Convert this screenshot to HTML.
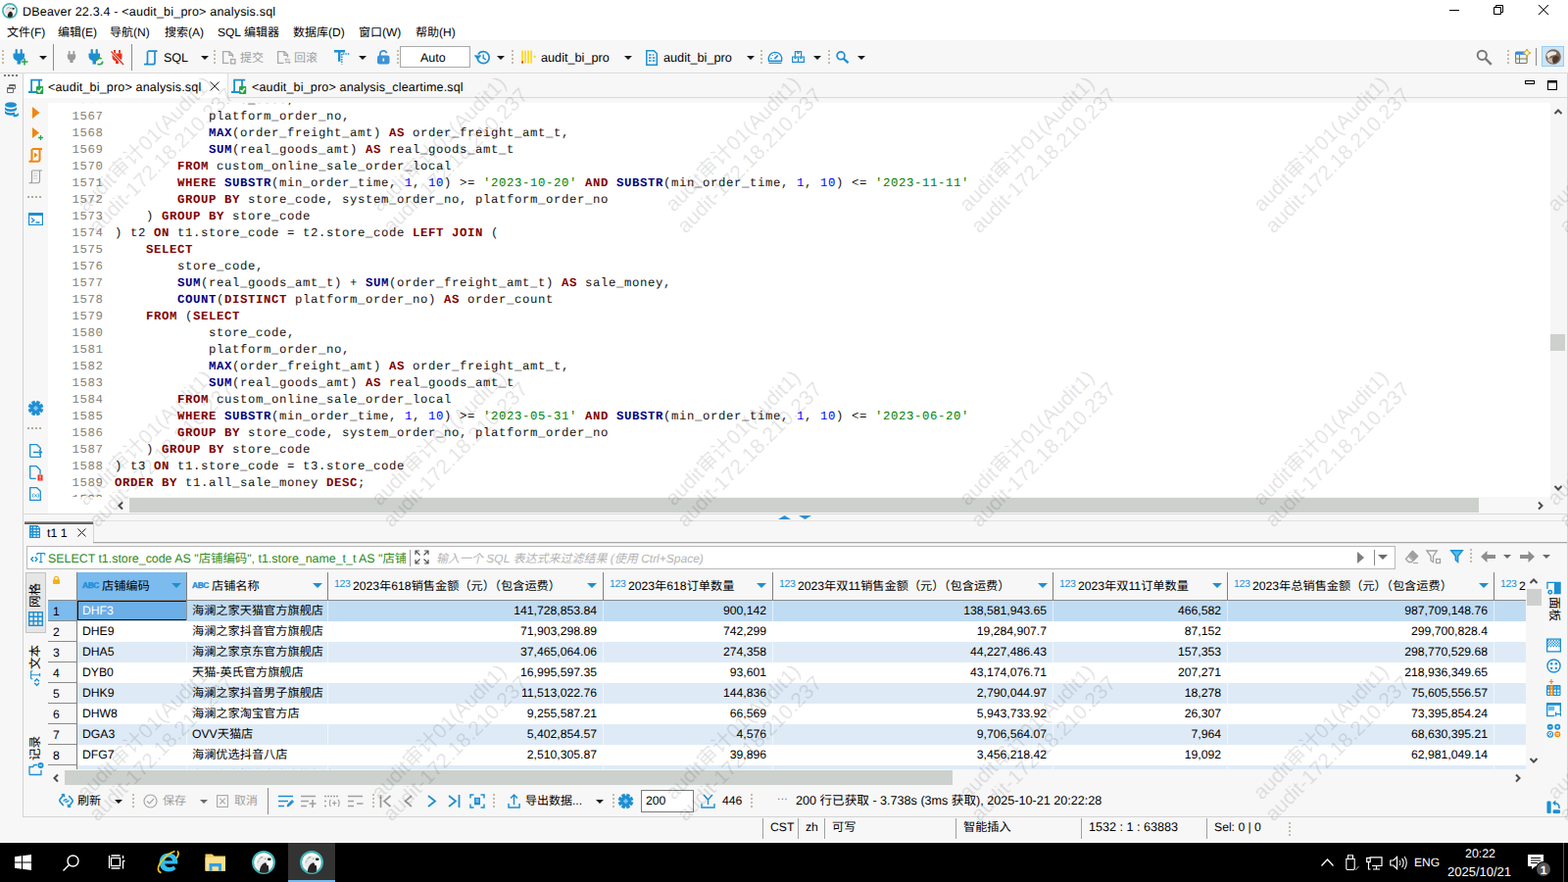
<!DOCTYPE html>
<html lang="zh">
<head>
<meta charset="utf-8">
<title>DBeaver 22.3.4 - &lt;audit_bi_pro&gt; analysis.sql</title>
<style>
*{box-sizing:border-box;margin:0;padding:0}
html,body{width:1600px;height:900px;overflow:hidden;background:#f7f7f7;font-family:"Liberation Sans","Noto Sans CJK SC",sans-serif;font-size:12px;color:#000;text-rendering:geometricPrecision}
body{position:relative}
.a{position:absolute}
.t{position:absolute;white-space:nowrap;line-height:16px;font-size:12px}
svg{position:absolute;overflow:visible}
#titlebar{position:absolute;left:0;top:0;width:1600px;height:41px;background:#fff}
.dd{position:absolute;width:0;height:0;border-left:4px solid transparent;border-right:4px solid transparent;border-top:4px solid #1a1a1a}
.ddg{border-top-color:#6a6a6a}
.vsep{position:absolute;width:1px;background:#8c8c8c}
.dots{position:absolute;width:2px;height:16px;background:repeating-linear-gradient(to bottom,#c4bba5 0,#c4bba5 2px,transparent 2px,transparent 4px)}
.hdots{position:absolute;height:2px;width:14px;background:repeating-linear-gradient(to right,#b3ab98 0,#b3ab98 2px,transparent 2px,transparent 4px)}
.dis{color:#a0a0a0}

.t::before{content:"\200b"}
#code{position:absolute;left:0;top:-11px;font-family:"Liberation Mono",monospace;font-size:12.300px;letter-spacing:.62px;line-height:17px;white-space:pre;color:#111;tab-size:4}
#code i{font-style:normal;display:inline-block;width:56.600px;text-align:right;color:#808080;margin-right:11.400px}
#code b{color:#800000;font-weight:bold}
#code b.f{color:#000080}
#code s{color:#008000;text-decoration:none}
#code u{color:#0000ff;text-decoration:none}
.row{position:absolute;left:29px;width:1479px;height:21px}
.r1{background:#c0dcf3}
.ro{background:#deebf7}
.cl{position:absolute;top:0;width:1px;height:28px;background:#7f7f7f}
.cr{position:absolute;top:29px;width:1px;height:172px;background:rgba(255,255,255,.55)}
.rs{position:absolute;left:0;width:29px;height:1px;background:#8a8a8a}
.abc{position:absolute;top:8px;font-size:8.400px;font-weight:bold;color:#1a8cd8;-webkit-text-stroke:.35px #1a8cd8;letter-spacing:-.4px;line-height:10px}
.n123{position:absolute;top:6px;font-size:10.500px;color:#1d8fd1;line-height:12px;letter-spacing:-.4px}
.h{top:6px;font-size:12.200px}
.tri{position:absolute;top:11px;width:0;height:0;border-left:5px solid transparent;border-right:5px solid transparent;border-top:5px solid #1d8fd1}
.rn{left:5px;font-size:12.200px}
.c1{left:35px;font-size:12.200px}
.c2{left:147px;font-size:12.200px}
.nr{font-size:12.200px}
.s{top:836px;font-size:12.200px}
.st{top:835px;height:21px;background:#a0a0a0}
.wm{position:absolute;width:300px;height:48px;margin:-24px 0 0 -150px;text-align:center;font-size:21px;line-height:24px;color:rgba(0,0,0,.065);text-shadow:0 0 1px rgba(0,0,0,.055);white-space:nowrap;transform:rotate(-45deg);transform-origin:50% 50%;z-index:50}
</style>
</head>
<body>
<!-- ===== title bar + menu ===== -->
<div id="titlebar">
<svg style="left:2px;top:3px" width="16" height="16" viewBox="0 0 24 24"><circle cx="12" cy="12" r="10.700" fill="#fff" stroke="#45b3b4" stroke-width="2.600"/><path d="M4.800 15c-.5-4 1.500-8.300 6-9.300 3-.7 6 0 8.300 2 .8.700.5 1.800-.5 2.100l-2 .7-.5 3.500-2.500-2c-2 1-3.500 3-4 6.500-2.500-.5-4.300-1.500-4.800-3.500z" fill="#e4e4e4"/><path d="M8.500 21.300c0-4 1.500-7 4.500-8.500l2.500 1.500.8 2.500c.3 1.500 0 3-.8 4.500-2 .9-4.800.9-7 0z" fill="#2a2322"/><ellipse cx="17.400" cy="8.700" rx="1.800" ry="1.300" fill="#1a1a1a"/><circle cx="13.300" cy="8.300" r=".8" fill="#333"/><path d="M7 9c1-1.500 2.500-2.300 4-2.500" stroke="#555" stroke-width=".8" fill="none"/></svg>
<span class="t" id="ttl" style="left:23px;top:4px;font-size:12.500px;letter-spacing:.2px">DBeaver 22.3.4 - &lt;audit_bi_pro&gt; analysis.sql</span>
<svg style="left:1479px;top:4px" width="102" height="12" viewBox="0 0 102 12" fill="none" stroke="#000" stroke-width="1"><path d="M0 6.500h10"/><path d="M45.500 3.500h7v7h-7z M47.500 3.500v-2h7v7h-2"/><path d="M91 1l10 10M101 1l-10 10"/></svg>
<span class="t m" style="left:7px;top:25px">文件(F)</span>
<span class="t m" style="left:59px;top:25px">编辑(E)</span>
<span class="t m" style="left:112px;top:25px">导航(N)</span>
<span class="t m" style="left:168px;top:25px">搜索(A)</span>
<span class="t m" style="left:222px;top:25px">SQL 编辑器</span>
<span class="t m" style="left:299px;top:25px">数据库(D)</span>
<span class="t m" style="left:366px;top:25px">窗口(W)</span>
<span class="t m" style="left:424px;top:25px">帮助(H)</span>
</div>
<!-- ===== main toolbar (y 41-74) ===== -->
<div class="a" id="toolbar" style="left:0;top:41px;width:1600px;height:34px;background:#f7f7f7;border-bottom:1px solid #dcdcdc"></div>
<div class="dots" style="left:2px;top:51px"></div>
<!-- new connection plug -->
<svg style="left:13px;top:51px" width="16" height="16" viewBox="0 0 16 16"><path d="M3.700 0v4M8.700 0v4" stroke="#1d8fd1" stroke-width="2.200" stroke-linecap="round"/><path d="M.5 3.500h11.500v3c0 2.500-2 4-4 4.500V14.500h-3.500v-3.500C2.500 10.500.5 9 .5 6.500z" fill="#1d8fd1"/><path d="M12 8.500v7M8.500 12h7" stroke="#2aa84a" stroke-width="1.600"/></svg>
<div class="dd" style="left:40px;top:57px"></div>
<div class="vsep" style="left:54px;top:45px;height:27px"></div>
<svg style="left:68px;top:52px" width="10" height="13" viewBox="0 0 10 14"><path d="M2.500 0v3.500M7.500 0v3.500" stroke="#9a9a9a" stroke-width="1.800"/><path d="M.5 3.500h9v3c0 2-1.200 3.300-2.800 3.600V13H3.300v-2.900C1.700 9.800.5 8.500.5 6.500z" fill="#9a9a9a"/></svg>
<svg style="left:90px;top:51px" width="16" height="16" viewBox="0 0 16 16"><path d="M3.700 0v4M8.700 0v4" stroke="#1d8fd1" stroke-width="2.200" stroke-linecap="round"/><path d="M.5 3.500h11.500v3c0 2.500-2 4-4 4.500V14.500h-3.500v-3.500C2.500 10.500.5 9 .5 6.500z" fill="#1d8fd1"/><circle cx="11.500" cy="11.500" r="3.200" fill="none" stroke="#2aa84a" stroke-width="1.600" stroke-dasharray="7 3"/></svg>
<svg style="left:112px;top:51px" width="16" height="16" viewBox="0 0 16 16"><path d="M5 0v3.500M10 0v3.500" stroke="#e8331c" stroke-width="2"/><path d="M2.500 3.500h10v3.500c0 2.500-1.500 4-3.500 4.300V14h-3v-2.700C4 11 2.500 9.500 2.500 7z" fill="#e8331c"/><path d="M1 1l13 14" stroke="#f7f7f7" stroke-width="2.600"/><path d="M1.500 1.500l12.500 13.500" stroke="#e8331c" stroke-width="1.300"/></svg>
<div class="vsep" style="left:134px;top:45px;height:27px"></div>
<!-- SQL -->
<svg style="left:146px;top:51px" width="16" height="16" viewBox="0 0 16 16" fill="none" stroke="#1d8fd1" stroke-width="1.700"><path d="M5 1.200h9.500M12 1.200v11.500c0 1.300-1 2-2.200 2H1M4.500 1.200v11.200c0 1.500-1 2.300-2.200 2.300"/></svg>
<span class="t" style="left:167px;top:51px;font-size:12.500px">SQL</span>
<div class="dd" style="left:205px;top:57px"></div>
<div class="dots" style="left:218px;top:51px"></div>
<svg style="left:226px;top:51px" width="15" height="15" viewBox="0 0 16 16" fill="none" stroke="#a8a8a8" stroke-width="1.400"><path d="M8 14.300H1.700V1.700h7l3.600 3.600V8M8.500 1.700v4h4"/><rect x="10.200" y="10.200" width="4.600" height="4.600"/></svg>
<span class="t dis" style="left:245px;top:51px">提交</span>
<svg style="left:282px;top:51px" width="15" height="15" viewBox="0 0 16 16" fill="none" stroke="#a8a8a8" stroke-width="1.400"><path d="M8 14.300H1.700V1.700h7l3.600 3.600V8M8.500 1.700v4h4"/><path d="M9.500 10.500h5.500M9.500 13.500h5.500M11 9l-1.500 1.500L11 12M13.500 12l1.500 1.500-1.500 1.500" stroke-width="1"/></svg>
<span class="t dis" style="left:300px;top:51px">回滚</span>
<svg style="left:341px;top:51px" width="16" height="15" viewBox="0 0 16 15" fill="none" stroke="#1d8fd1"><path d="M0 1.200h11M5.200 1.200v10.500" stroke-width="2.400"/><path d="M8.800 4h6.500" stroke-width="1.500" stroke-dasharray="1.500 1"/><path d="M7.800 4v10.500" stroke-width="1.500" stroke-dasharray="1.500 1"/></svg>
<div class="dd" style="left:366px;top:57px"></div>
<svg style="left:385px;top:51px" width="13" height="15" viewBox="0 0 13 15"><path d="M2.800 6V4.200a3.500 3.500 0 016.800-1" fill="none" stroke="#3d92d6" stroke-width="1.700"/><rect x="0" y="5.500" width="12.500" height="9" rx="2.200" fill="#3d92d6"/><rect x="5.500" y="8.500" width="1.600" height="3" fill="#fff"/></svg>
<div class="dots" style="left:405px;top:51px"></div>
<div class="a" style="left:408px;top:47px;width:72px;height:22px;background:#fff;border:1px solid #a9a9a9"></div>
<span class="t" style="left:429px;top:51px;font-size:12.500px">Auto</span>
<svg style="left:484px;top:51px" width="17" height="16" viewBox="0 0 17 16" fill="none" stroke="#1d8fd1" stroke-width="1.700"><path d="M3.200 8a6 6 0 106-6.300A6 6 0 004 4.500"/><path d="M.5 5.500l3 3.300 3-3.300" stroke-width="1.400" fill="#1d8fd1"/><path d="M9.200 4.500V8.300l2.800 1.700" stroke-width="1.400"/></svg>
<div class="dd" style="left:507px;top:57px"></div>
<div class="dots" style="left:522px;top:51px"></div>
<svg style="left:532px;top:51px" width="16" height="14" viewBox="0 0 16 14"><path d="M1 .5v13M4 .5v13M7 .5v13M10 .5v13" stroke="#ffd400" stroke-width="1.500"/><rect x=".2" y="11.500" width="1.800" height="2" fill="#f02b1d"/><rect x="12.800" y="5.800" width="1.800" height="2" fill="#ffd400"/></svg>
<span class="t" style="left:552px;top:51px;font-size:12.700px">audit_bi_pro</span>
<div class="dd" style="left:637px;top:57px"></div>
<svg style="left:659px;top:51px" width="12" height="16" viewBox="0 0 12 16" fill="none" stroke="#1d8fd1"><path d="M.8.800h7.500l3 3V15.200H.8z" stroke-width="1.500"/><path d="M3 5h2.500M3 8h2.500M3 11h2.500M6.800 8h2.500M6.800 11h2.500M6.800 5h1.500" stroke-width="1.500"/></svg>
<span class="t" style="left:677px;top:51px;font-size:12.700px">audit_bi_pro</span>
<div class="dd" style="left:762px;top:57px"></div>
<div class="dots" style="left:776px;top:51px"></div>
<svg style="left:783px;top:52px" width="16" height="13" viewBox="0 0 16 13" fill="none" stroke="#1d8fd1" stroke-width="1.400"><path d="M1.500 10.200a6.800 6.800 0 1113 0z"/><path d="M1.500 12.300h13" stroke-width="1.200"/><path d="M7.500 8l3.200-3.500" stroke-width="1.800"/><path d="M3.200 7.500h1.300M8 2.500v1.300M5 4l.8.800" stroke-width="1"/></svg>
<svg style="left:808px;top:52px" width="13" height="12" viewBox="0 0 13 12" fill="none" stroke="#1d8fd1" stroke-width="1.200"><path d="M3.400.6h6.200v5.400H3.400zM.6 6h5.900v5.400H.6zM6.500 6h5.900v5.400H6.500z"/><path d="M5.700.6v1.800h1.600V.6M2.800 6v1.600h1.500V6M8.700 6v1.600h1.500V6" stroke-width="1"/></svg>
<div class="dd" style="left:830px;top:57px"></div>
<div class="dots" style="left:845px;top:51px"></div>
<svg style="left:853px;top:52px" width="14" height="13" viewBox="0 0 14 13" fill="none" stroke="#1d8fd1"><circle cx="5" cy="4.800" r="3.900" stroke-width="1.700"/><path d="M7.800 7.800l4.800 4.400" stroke-width="2.300"/></svg>
<div class="dd" style="left:875px;top:57px"></div>
<!-- right side of toolbar -->
<svg style="left:1506px;top:50px" width="17" height="17" viewBox="0 0 17 17" fill="none" stroke="#7a7a7a"><circle cx="6.300" cy="6.300" r="4.600" stroke-width="2"/><path d="M9.800 9.800l6 6" stroke-width="2.400"/></svg>
<div class="dots" style="left:1538px;top:51px"></div>
<svg style="left:1546px;top:50px" width="16" height="16" viewBox="0 0 16 16"><rect x=".6" y="3" width="11.500" height="11.500" rx="1" fill="#e8f3fb" stroke="#8a7a4a" stroke-width="1.100"/><rect x=".6" y="3" width="11.500" height="2.800" fill="#3b8ad9"/><path d="M4.500 6v8.500M.6 10h11.500" stroke="#8a7a4a" stroke-width="1"/><path d="M12 0l1.300 2.700L16 4l-2.700 1.300L12 8l-1.300-2.700L8 4l2.700-1.300z" fill="#fff6c8" stroke="#c9a227" stroke-width="1"/></svg>
<div class="vsep" style="left:1567px;top:49px;height:18px;background:#8a8a8a"></div>
<div class="a" style="left:1573px;top:47px;width:23px;height:21px;background:#cce4f7;border:1px solid #99ccf0"></div>
<svg style="left:1577px;top:50px" width="16" height="16" viewBox="0 0 16 16"><circle cx="8" cy="8" r="7.800" fill="#7d6657"/><path d="M1 6c2-3.500 6-4.500 9.500-3 1.500 1 1 2.500-1 3-3 .5-5 1-6.500 4z" fill="#efe9e2"/><path d="M8 8c2-1.500 4.500-1 6 .5-.5 3-2.500 5.500-5.500 6.500C7 13 7 10 8 8z" fill="#4a382f"/><path d="M2 11c1.500-1.500 3.500-2 5-1.500-.5 2 0 3.500 1 5-2.500.5-5-1-6-3.500z" fill="#c9b8a8"/></svg>
<!-- ===== left trim bar ===== -->
<div class="hdots" style="left:4px;top:76px;background:repeating-linear-gradient(to right,#777 0,#777 2px,transparent 2px,transparent 4px)"></div>
<svg style="left:7px;top:86px" width="9" height="9" viewBox="0 0 9 9" fill="none" stroke="#6a6a6a" stroke-width="1"><path d="M2.500 2.500v-2h6v4h-2"/><path d="M.5 3.500h6v5h-6z"/><path d="M.5 4.500h6M2.500 1.500h6"/></svg>
<svg style="left:4px;top:104px" width="16" height="16" viewBox="0 0 16 16" fill="#1d8fd1"><ellipse cx="7" cy="3" rx="6" ry="2.800"/><path d="M1 5.200c1 1.600 3.500 2.200 6 2.200s5-.6 6-2.200v2.600c-1 1.600-3.500 2.200-6 2.200s-5-.6-6-2.200zM1 9c1 1.600 3.500 2.200 6 2.200 1.500 0 2.800-.2 4-.6v2.500c-1.200.5-2.600.7-4 .7-2.500 0-5-.6-6-2.200z"/><path d="M9.500 12.500c2 .8 4.500.3 5.500-1.500v2.500c-1 1.500-3.500 2.200-5.500 1.500z"/></svg>
<!-- panel borders -->
<div class="a" style="left:23px;top:75px;width:1px;height:759px;background:#d4d4d4"></div>
<div class="a" style="left:1599px;top:75px;width:1px;height:759px;background:#d4d4d4"></div>
<div class="a" style="left:23px;top:833px;width:1577px;height:1px;background:#d4d4d4"></div>
<!-- ===== editor tab strip (y 75-99) ===== -->
<div class="a" style="left:24px;top:99px;width:1575px;height:1px;background:#d9d9d9"></div>
<div class="a" id="tab1" style="left:24px;top:75px;width:209px;height:25px;background:#fff;border-right:1px solid #dedede"></div>
<svg class="sqlico" style="left:29px;top:80px" width="16" height="16" viewBox="0 0 16 16"><path d="M2.200 1.700H14.200M3.100 1.700v10.300c0 1.300-.6 2-1.600 2M11 1.700V9M0 14h8.500" fill="none" stroke="#1d8fd1" stroke-width="1.800"/><rect x="8" y="8" width="7.200" height="8" rx=".8" fill="#22a548"/><path d="M9.300 12l1.800 1.900 2.700-4" stroke="#fff" stroke-width="1.500" fill="none"/></svg>
<span class="t" id="tab1t" style="left:49px;top:81px;font-size:12.500px;letter-spacing:.18px">&lt;audit_bi_pro&gt; analysis.sql</span>
<svg style="left:214px;top:83px" width="10" height="10" viewBox="0 0 10 10" stroke="#222" stroke-width="1" fill="none"><path d="M.5.500l9 9M9.500.5l-9 9"/></svg>
<svg class="sqlico" style="left:236px;top:80px" width="16" height="16" viewBox="0 0 16 16"><path d="M2.200 1.700H14.200M3.100 1.700v10.300c0 1.300-.6 2-1.600 2M11 1.700V9M0 14h8.500" fill="none" stroke="#1d8fd1" stroke-width="1.800"/><rect x="8" y="8" width="7.200" height="8" rx=".8" fill="#22a548"/><path d="M9.300 12l1.800 1.900 2.700-4" stroke="#fff" stroke-width="1.500" fill="none"/></svg>
<span class="t" id="tab2t" style="left:257px;top:81px;font-size:12.500px;letter-spacing:.18px">&lt;audit_bi_pro&gt; analysis_cleartime.sql</span>
<svg style="left:1556px;top:82px" width="34" height="11" viewBox="0 0 34 11" fill="none" stroke="#000"><rect x=".5" y=".5" width="9" height="3"/><rect x="23.500" y=".5" width="9" height="9"/><path d="M23 1.500h10" stroke-width="2"/></svg>
<!-- ===== editor ===== -->
<div class="a" id="edwhite" style="left:49px;top:105px;width:1533px;height:419px;background:#fff"></div>
<div class="a" style="left:24px;top:524px;width:1575px;height:1px;background:#d9d9d9"></div>
<!-- gutter icons -->
<svg style="left:33px;top:109px" width="8" height="12" viewBox="0 0 8 12"><path d="M0 0l7.500 6L0 12z" fill="#f0860f"/></svg>
<svg style="left:33px;top:130px" width="11" height="13" viewBox="0 0 11 13"><path d="M0 0l7 5.500L0 11z" fill="#f0860f"/><path d="M8.500 8v5M6 10.500h5" stroke="#2aa84a" stroke-width="1.300"/></svg>
<svg style="left:29px;top:151px" width="15" height="15" viewBox="0 0 15 15" fill="none" stroke="#f0860f" stroke-width="2"><path d="M4 1h10M11.500 1v10.500c0 1.300-1 2.200-2.200 2.200H.5M3.500 1v10.500c0 1.300-.7 2.200-1.800 2.200"/><path d="M6 4.500l3.500 2.800L6 10z" fill="#f0860f" stroke="none"/></svg>
<svg style="left:29px;top:173px" width="15" height="15" viewBox="0 0 15 15" fill="none" stroke="#9a9a9a" stroke-width="1.100"><path d="M4 1h10M11.500 1v10.500c0 1.300-1 2.200-2.200 2.200H.5M3.500 1v10.500c0 1.300-.7 2.200-1.800 2.200"/><path d="M5.500 4h4M5.500 6.500h4M5.500 9h4" stroke-dasharray="1 1"/></svg>
<div class="hdots" style="left:28px;top:200px"></div>
<svg style="left:29px;top:217px" width="15" height="13" viewBox="0 0 15 13"><rect x=".6" y=".6" width="13.800" height="11.800" fill="#fff" stroke="#1d8fd1" stroke-width="1.200"/><rect x=".6" y=".6" width="13.800" height="2.400" fill="#1d8fd1"/><path d="M3 5.500l2.800 2.300L3 10M7.500 10h4" stroke="#1d8fd1" stroke-width="1.400" fill="none"/></svg>
<svg style="left:29px;top:409px" width="15" height="15" viewBox="0 0 15 15"><path d="M12.670 8.020L14.870 8.890L13.690 11.730L11.530 10.790L10.790 11.530L11.730 13.690L8.890 14.870L8.020 12.670L6.980 12.670L6.110 14.870L3.270 13.690L4.210 11.530L3.470 10.790L1.310 11.730L0.130 8.890L2.330 8.020L2.330 6.980L0.130 6.110L1.310 3.270L3.470 4.210L4.210 3.470L3.270 1.310L6.110 0.130L6.980 2.330L8.020 2.330L8.890 0.130L11.730 1.310L10.790 3.470L11.530 4.210L13.690 3.270L14.870 6.110L12.670 6.980z" fill="#1d8fd1" stroke="#1d8fd1" stroke-width=".8" stroke-linejoin="round"/><path d="M7.500 4.800l2.700 2.700-2.700 2.700-2.700-2.700z" fill="#7cc6f0"/></svg>
<div class="hdots" style="left:28px;top:436px"></div>
<svg style="left:30px;top:453px" width="13" height="14" viewBox="0 0 13 14" fill="none" stroke="#1d8fd1" stroke-width="1.300"><path d="M.7 13.300V.7h7l3.600 3.600v2M11.300 10.500v2.800H.7"/><path d="M4 8.500h8.500M10 6l2.500 2.500L10 11" stroke-width="1.300"/></svg>
<svg style="left:30px;top:475px" width="14" height="16" viewBox="0 0 14 16"><path d="M.7 13.300V.7h6.500l3.800 3.800v4.500M.7 13.300h6" fill="none" stroke="#1d8fd1" stroke-width="1.300"/><rect x="8.500" y="9.500" width="5" height="6" fill="#f02b1d"/><rect x="10.500" y="10.500" width="1" height="2.500" fill="#fff"/><rect x="10.500" y="13.700" width="1" height="1" fill="#fff"/></svg>
<svg style="left:30px;top:497px" width="13" height="14" viewBox="0 0 13 14" fill="none" stroke="#1d8fd1"><path d="M.7 13.300V.7h7l3.600 3.600v9z" stroke-width="1.300"/><path d="M4.200 6.500c-1 1.200-1 3 0 4.200M8.800 6.500c1 1.200 1 3 0 4.200M5.500 7.500l2 2.400M7.500 7.500l-2 2.400" stroke-width=".9"/></svg>
<!-- code -->
<div class="a" id="codeclip" style="left:49px;top:105px;width:1533px;height:402px;overflow:hidden">
<pre id="code">
<i>1566</i>            store_code,
<i>1567</i>            platform_order_no,
<i>1568</i>            <b class="f">MAX</b>(order_freight_amt) <b>AS</b> order_freight_amt_t,
<i>1569</i>            <b class="f">SUM</b>(real_goods_amt) <b>AS</b> real_goods_amt_t
<i>1570</i>        <b>FROM</b> custom_online_sale_order_local
<i>1571</i>        <b>WHERE</b> <b class="f">SUBSTR</b>(min_order_time, <u>1</u>, <u>10</u>) &gt;= <s>'2023-10-20'</s> <b>AND</b> <b class="f">SUBSTR</b>(min_order_time, <u>1</u>, <u>10</u>) &lt;= <s>'2023-11-11'</s>
<i>1572</i>        <b>GROUP BY</b> store_code, system_order_no, platform_order_no
<i>1573</i>    ) <b>GROUP BY</b> store_code
<i>1574</i>) t2 <b>ON</b> t1.store_code = t2.store_code <b>LEFT JOIN</b> (
<i>1575</i>    <b>SELECT</b>
<i>1576</i>        store_code,
<i>1577</i>        <b class="f">SUM</b>(real_goods_amt_t) + <b class="f">SUM</b>(order_freight_amt_t) <b>AS</b> sale_money,
<i>1578</i>        <b class="f">COUNT</b>(<b>DISTINCT</b> platform_order_no) <b>AS</b> order_count
<i>1579</i>    <b>FROM</b> (<b>SELECT</b>
<i>1580</i>            store_code,
<i>1581</i>            platform_order_no,
<i>1582</i>            <b class="f">MAX</b>(order_freight_amt) <b>AS</b> order_freight_amt_t,
<i>1583</i>            <b class="f">SUM</b>(real_goods_amt) <b>AS</b> real_goods_amt_t
<i>1584</i>        <b>FROM</b> custom_online_sale_order_local
<i>1585</i>        <b>WHERE</b> <b class="f">SUBSTR</b>(min_order_time, <u>1</u>, <u>10</u>) &gt;= <s>'2023-05-31'</s> <b>AND</b> <b class="f">SUBSTR</b>(min_order_time, <u>1</u>, <u>10</u>) &lt;= <s>'2023-06-20'</s>
<i>1586</i>        <b>GROUP BY</b> store_code, system_order_no, platform_order_no
<i>1587</i>    ) <b>GROUP BY</b> store_code
<i>1588</i>) t3 <b>ON</b> t1.store_code = t3.store_code
<i>1589</i><b>ORDER BY</b> t1.all_sale_money <b>DESC</b>;
<i>1590</i>
</pre>
</div>
<!-- editor scrollbars -->
<div class="a" style="left:1582px;top:105px;width:17px;height:402px;background:#f6f6f6"></div>
<svg style="left:1586px;top:111px" width="8" height="6" viewBox="0 0 8 6" fill="none" stroke="#4d4d4d" stroke-width="2"><path d="M.5 5l3.500-3.500L7.500 5"/></svg>
<svg style="left:1586px;top:495px" width="8" height="6" viewBox="0 0 8 6" fill="none" stroke="#4d4d4d" stroke-width="2"><path d="M.5 1l3.500 3.500L7.500 1"/></svg>
<div class="a" style="left:1582px;top:341px;width:15px;height:17px;background:#cdd1cd"></div>
<div class="a" style="left:116px;top:507px;width:1483px;height:17px;background:#f7f7f7"></div><div class="a" style="left:132px;top:508px;width:1377px;height:15px;background:#cdd1cd"></div>
<svg style="left:120px;top:512px" width="6" height="8" viewBox="0 0 6 8" fill="none" stroke="#4d4d4d" stroke-width="2"><path d="M5 .5L1.500 4 5 7.500"/></svg>
<svg style="left:1569px;top:512px" width="6" height="8" viewBox="0 0 6 8" fill="none" stroke="#4d4d4d" stroke-width="2"><path d="M1 .5L4.500 4 1 7.500"/></svg>
<!-- sash arrows -->
<svg style="left:794px;top:526px" width="35" height="4" viewBox="0 0 35 4" fill="#2b8fd6"><path d="M0 4L6.500 0 13 4zM21 0h13L27.500 4z"/></svg>
<!-- ===== results tab strip ===== -->
<div class="a" style="left:95px;top:531px;width:1504px;height:1px;background:#e2e2e2"></div>
<div class="a" style="left:25px;top:532px;width:70px;height:3px;background:linear-gradient(#b8b8b8,#5e5e5e 60%,#5a5a5a)"></div>
<div class="a" style="left:95px;top:533px;width:1px;height:21px;background:#d4d4d4"></div>
<div class="a" style="left:95px;top:553px;width:1504px;height:1px;background:#a8a8a8"></div><div class="a" style="left:95px;top:554px;width:1504px;height:1px;background:#e4e4e4"></div>
<svg style="left:30px;top:536px" width="11" height="13" viewBox="0 0 11 13"><path d="M0 0h8.300L11 2.700V13H0z" fill="#1d8fd1"/><path d="M1.200 1.600h1.700v1.500H1.200zM1.200 4.500h1.700v1.500H1.200zM1.200 7.400h1.700v1.500H1.200zM1.200 10.300h1.700v1.500H1.200z" fill="#8fd3f4"/><path d="M4.200 1.600h2.300v1.500H4.200zM4.200 4.500h2.300v1.500H4.200zM4.200 7.400h2.300v1.500H4.200zM4.200 10.300h2.300v1.500H4.200zM7.700 4.500h2.100v1.500H7.700zM7.700 7.400h2.100v1.500H7.700zM7.700 10.300h2.100v1.500H7.700zM7.700 2h1.200l.9.900v.2H7.700z" fill="#fff"/></svg>
<span class="t" id="rtabt" style="left:48px;top:536px;font-size:12.400px">t1 1</span>
<svg style="left:79px;top:539px" width="9" height="9" viewBox="0 0 9 9" stroke="#222" stroke-width="1" fill="none"><path d="M.5.500l8 8M8.500.5l-8 8"/></svg>
<!-- ===== filter bar ===== -->
<div class="a" style="left:27px;top:557px;width:1397px;height:24px;background:#fff;border:1px solid #b9b9b9"></div>
<svg style="left:31px;top:562px" width="15" height="13" viewBox="0 0 15 13" fill="none" stroke="#1d8fd1"><path d="M3 6.200L.8 8.600 3 11M4.800 6.200L7 8.600 4.800 11" stroke-width="1.400"/><path d="M6.800 2.600h8M10.800 2.600v9M9.200 11.600h3.200M6.800 2.600v1.800M14.800 2.600v1.800" stroke-width="1.100"/></svg>
<span class="t" id="fsql" style="left:49px;top:562px;width:365px;overflow:hidden;font-size:12.400px;color:#2d8a1e">SELECT t1.store_code AS "店铺编码", t1.store_name_t_t AS "店铺:</span>
<div class="a" style="left:418px;top:561px;width:1px;height:17px;background:#9a9a9a"></div>
<svg style="left:423px;top:561px" width="15" height="15" viewBox="0 0 15 15" fill="none" stroke="#555" stroke-width="1.200"><path d="M1 5V1h4M10 1h4v4M14 10v4h-4M5 14H1v-4M1.500 1.500l4 4M13.500 1.500l-4 4M13.500 13.500l-4-4M1.500 13.500l4-4"/></svg>
<span class="t" id="fph" style="left:445px;top:562px;font-size:12px;color:#b4b4b4;font-style:italic">输入一个 SQL 表达式来过滤结果 (使用 Ctrl+Space)</span>
<svg style="left:1385px;top:563px" width="7" height="12" viewBox="0 0 7 12"><path d="M0 0l7 6-7 6z" fill="#7d7d7d"/></svg>
<div class="a" style="left:1402px;top:561px;width:1px;height:16px;background:#8a8a8a"></div>
<div class="dd ddg" style="left:1406px;top:566px;border-left-width:5px;border-right-width:5px;border-top-width:5px"></div>
<svg style="left:1433px;top:561px" width="15" height="15" viewBox="0 0 15 15" fill="none" stroke="#a0a0a0" stroke-width="1.300"><path d="M8.500 1.500l5 5-6 6h-3l-3-3z"/><path d="M4 6l5 5" /><path d="M9 13.500h5" stroke-width="1"/><path d="M8.500 1.500l5 5-3.500 3.500-5-5z" fill="#a0a0a0"/></svg>
<svg style="left:1455px;top:561px" width="16" height="15" viewBox="0 0 16 15" fill="none" stroke="#a0a0a0" stroke-width="1.300"><path d="M.8 1h10.500L7.500 6.500v6l-2.500-1.500V6.500z"/><rect x="10.500" y="9.500" width="4" height="4"/></svg>
<svg style="left:1480px;top:561px" width="13" height="14" viewBox="0 0 13 14"><path d="M.7.700h11.600L7.700 6.500v6L5.300 10.500V6.500z" fill="#4fc0ef" stroke="#1d8fd1" stroke-width="1.400"/></svg>
<div class="dots" style="left:1500px;top:560px"></div>
<svg style="left:1511px;top:562px" width="15" height="12" viewBox="0 0 15 12"><path d="M0 6l6.500-6v4H15v4H6.500v4z" fill="#8e8e8e"/></svg>
<div class="dd ddg" style="left:1534px;top:566px"></div>
<svg style="left:1551px;top:562px" width="15" height="12" viewBox="0 0 15 12"><path d="M15 6L8.500 0v4H0v4h8.500v4z" fill="#8e8e8e"/></svg>
<div class="dd ddg" style="left:1574px;top:566px"></div>
<!-- ===== left vertical tabs ===== -->
<div class="a" style="left:26px;top:584px;width:21px;height:62px;background:#e6e6e6;border:1px solid #c4c4c4"></div>
<span class="t vt" style="left:29px;top:620px;font-size:12.500px;transform:rotate(-90deg);transform-origin:0 0;line-height:15px">网格</span>
<svg style="left:29px;top:624px" width="15" height="15" viewBox="0 0 15 15" fill="none" stroke="#1d8fd1" stroke-width="1.400"><rect x=".7" y=".7" width="13.600" height="13.600"/><path d="M5.200.7v13.600M9.800.7v13.600M.7 5.200h13.600M.7 9.800h13.600"/></svg>
<span class="t vt" style="left:29px;top:683px;font-size:12.500px;transform:rotate(-90deg);transform-origin:0 0;line-height:15px">文本</span>
<svg style="left:30px;top:684px" width="13" height="16" viewBox="0 0 13 16" fill="none" stroke="#1d8fd1"><g transform="translate(0 16) rotate(-90)"><path d="M3 5.200L.8 7.600 3 10M4.800 5.200L7 7.600 4.800 10" stroke-width="1.400"/><path d="M7.300 1.600h8M11.300 1.600v9M9.700 10.600h3.200M7.300 1.600v1.800M15.300 1.600v1.800" stroke-width="1.100"/></g></svg>
<span class="t vt" style="left:29px;top:776px;font-size:12.500px;transform:rotate(-90deg);transform-origin:0 0;line-height:15px">记录</span>
<svg style="left:29px;top:777px" width="16" height="15" viewBox="0 0 16 15" fill="none" stroke="#1d8fd1" stroke-width="1.300"><path d="M1 13.500V5.500h3.500l1.500-2h3M1 13.500h12V9"/><circle cx="12.500" cy="4" r="3" fill="#1d8fd1" stroke="none"/><path d="M11 4h3" stroke="#fff" stroke-width="1"/></svg>
<!-- ===== grid ===== -->
<div class="a" id="grid" style="left:49px;top:584px;width:1508px;height:201px;overflow:hidden;background:#fff">
<div class="row r1" style="top:29px"></div>
<div class="row ro" style="top:71px"></div>
<div class="row ro" style="top:113px"></div>
<div class="row ro" style="top:155px"></div>
<div class="row ro" style="top:197px"></div>
<div class="a" style="left:0;top:0;width:1508px;height:28px;background:#f7f7f7"></div><div class="a" style="left:0;top:28px;width:1508px;height:1px;background:#8a8a8a;z-index:2"></div>
<div class="a" style="left:29px;top:0;width:113px;height:28px;background:#7bbbee"></div>
<div class="a" style="left:0;top:28px;width:29px;height:173px;background:#f7f7f7"></div>
<div class="a" style="left:0;top:29px;width:29px;height:20px;background:#7bbbee"></div>
<div class="a" style="left:30px;top:29px;width:112px;height:20px;background:#6caee6;border:1px solid #111"></div>
<!-- column lines -->
<div class="cl" style="left:29px"></div><div class="cl" style="left:141px"></div><div class="cl" style="left:285px"></div><div class="cl" style="left:566px"></div><div class="cl" style="left:739px"></div><div class="cl" style="left:1025px"></div><div class="cl" style="left:1203px"></div><div class="cl" style="left:1475px"></div>
<div class="cr" style="left:141px"></div><div class="cr" style="left:285px"></div><div class="cr" style="left:566px"></div><div class="cr" style="left:739px"></div><div class="cr" style="left:1025px"></div><div class="cr" style="left:1203px"></div><div class="cr" style="left:1475px"></div>
<div class="a" style="left:29px;top:28px;width:1px;height:173px;background:#7f7f7f"></div>
<!-- row number separators -->
<div class="rs" style="top:49px"></div><div class="rs" style="top:70px"></div><div class="rs" style="top:91px"></div><div class="rs" style="top:112px"></div><div class="rs" style="top:133px"></div><div class="rs" style="top:154px"></div><div class="rs" style="top:175px"></div><div class="rs" style="top:196px"></div>
<!-- lock -->
<svg style="left:5px;top:4px" width="7" height="8" viewBox="0 0 7 8"><path d="M1.500 3.500V2.300a2 2 0 014 0V3.500" fill="none" stroke="#f2b116" stroke-width="1.200"/><rect x="0" y="3.200" width="7" height="4.800" rx=".8" fill="#f2b116"/></svg>
<!-- header labels -->
<span class="abc" style="left:35px">ABC</span><span class="t h" style="left:55px">店铺编码</span><div class="tri" style="left:126px"></div>
<span class="abc" style="left:147px">ABC</span><span class="t h" style="left:167px">店铺名称</span><div class="tri" style="left:270px"></div>
<span class="n123" style="left:292px">123</span><span class="t h" style="left:311px">2023年618销售金额（元）（包含运费）</span><div class="tri" style="left:550px"></div>
<span class="n123" style="left:573px">123</span><span class="t h" style="left:592px">2023年618订单数量</span><div class="tri" style="left:723px"></div>
<span class="n123" style="left:746px">123</span><span class="t h" style="left:765px">2023年双11销售金额（元）（包含运费）</span><div class="tri" style="left:1010px"></div>
<span class="n123" style="left:1032px">123</span><span class="t h" style="left:1051px">2023年双11订单数量</span><div class="tri" style="left:1188px"></div>
<span class="n123" style="left:1210px">123</span><span class="t h" style="left:1229px">2023年总销售金额（元）（包含运费）</span><div class="tri" style="left:1460px"></div>
<span class="n123" style="left:1482px">123</span><span class="t h" style="left:1501px">2023年</span>
<!-- cells -->
<span class="t rn" style="top:32px">1</span><span class="t c1" style="top:31px;color:#fff">DHF3</span><span class="t c2" style="top:31px">海澜之家天猫官方旗舰店</span><span class="t nr" style="top:31px;right:948px">141,728,853.84</span><span class="t nr" style="top:31px;right:775px">900,142</span><span class="t nr" style="top:31px;right:489px">138,581,943.65</span><span class="t nr" style="top:31px;right:311px">466,582</span><span class="t nr" style="top:31px;right:39px">987,709,148.76</span>
<span class="t rn" style="top:53px">2</span><span class="t c1" style="top:52px">DHE9</span><span class="t c2" style="top:52px">海澜之家抖音官方旗舰店</span><span class="t nr" style="top:52px;right:948px">71,903,298.89</span><span class="t nr" style="top:52px;right:775px">742,299</span><span class="t nr" style="top:52px;right:489px">19,284,907.7</span><span class="t nr" style="top:52px;right:311px">87,152</span><span class="t nr" style="top:52px;right:39px">299,700,828.4</span>
<span class="t rn" style="top:74px">3</span><span class="t c1" style="top:73px">DHA5</span><span class="t c2" style="top:73px">海澜之家京东官方旗舰店</span><span class="t nr" style="top:73px;right:948px">37,465,064.06</span><span class="t nr" style="top:73px;right:775px">274,358</span><span class="t nr" style="top:73px;right:489px">44,227,486.43</span><span class="t nr" style="top:73px;right:311px">157,353</span><span class="t nr" style="top:73px;right:39px">298,770,529.68</span>
<span class="t rn" style="top:95px">4</span><span class="t c1" style="top:94px">DYB0</span><span class="t c2" style="top:94px">天猫-英氏官方旗舰店</span><span class="t nr" style="top:94px;right:948px">16,995,597.35</span><span class="t nr" style="top:94px;right:775px">93,601</span><span class="t nr" style="top:94px;right:489px">43,174,076.71</span><span class="t nr" style="top:94px;right:311px">207,271</span><span class="t nr" style="top:94px;right:39px">218,936,349.65</span>
<span class="t rn" style="top:116px">5</span><span class="t c1" style="top:115px">DHK9</span><span class="t c2" style="top:115px">海澜之家抖音男子旗舰店</span><span class="t nr" style="top:115px;right:948px">11,513,022.76</span><span class="t nr" style="top:115px;right:775px">144,836</span><span class="t nr" style="top:115px;right:489px">2,790,044.97</span><span class="t nr" style="top:115px;right:311px">18,278</span><span class="t nr" style="top:115px;right:39px">75,605,556.57</span>
<span class="t rn" style="top:137px">6</span><span class="t c1" style="top:136px">DHW8</span><span class="t c2" style="top:136px">海澜之家淘宝官方店</span><span class="t nr" style="top:136px;right:948px">9,255,587.21</span><span class="t nr" style="top:136px;right:775px">66,569</span><span class="t nr" style="top:136px;right:489px">5,943,733.92</span><span class="t nr" style="top:136px;right:311px">26,307</span><span class="t nr" style="top:136px;right:39px">73,395,854.24</span>
<span class="t rn" style="top:158px">7</span><span class="t c1" style="top:157px">DGA3</span><span class="t c2" style="top:157px">OVV天猫店</span><span class="t nr" style="top:157px;right:948px">5,402,854.57</span><span class="t nr" style="top:157px;right:775px">4,576</span><span class="t nr" style="top:157px;right:489px">9,706,564.07</span><span class="t nr" style="top:157px;right:311px">7,964</span><span class="t nr" style="top:157px;right:39px">68,630,395.21</span>
<span class="t rn" style="top:179px">8</span><span class="t c1" style="top:178px">DFG7</span><span class="t c2" style="top:178px">海澜优选抖音八店</span><span class="t nr" style="top:178px;right:948px">2,510,305.87</span><span class="t nr" style="top:178px;right:775px">39,896</span><span class="t nr" style="top:178px;right:489px">3,456,218.42</span><span class="t nr" style="top:178px;right:311px">19,092</span><span class="t nr" style="top:178px;right:39px">62,981,049.14</span>
<span class="t rn" style="top:200px">9</span><span class="t c1" style="top:199px">DHF7</span><span class="t c2" style="top:199px">海澜之家拼多多官方旗舰店</span>
</div>
<!-- grid scrollbars -->
<div class="a" style="left:1557px;top:584px;width:17px;height:201px;background:#f6f6f6"></div>
<svg style="left:1561px;top:590px" width="8" height="6" viewBox="0 0 8 6" fill="none" stroke="#4d4d4d" stroke-width="2"><path d="M.5 5l3.500-3.500L7.500 5"/></svg>
<div class="a" style="left:1558px;top:601px;width:15px;height:17px;background:#cdd1cd"></div>
<svg style="left:1561px;top:773px" width="8" height="6" viewBox="0 0 8 6" fill="none" stroke="#4d4d4d" stroke-width="2"><path d="M.5 1l3.500 3.500L7.500 1"/></svg>
<div class="a" style="left:49px;top:785px;width:1525px;height:17px;background:#f7f7f7"></div>
<div class="a" style="left:66px;top:786px;width:906px;height:15px;background:#cdd1cd"></div>
<svg style="left:54px;top:790px" width="6" height="8" viewBox="0 0 6 8" fill="none" stroke="#4d4d4d" stroke-width="2"><path d="M5 .5L1.500 4 5 7.500"/></svg>
<svg style="left:1546px;top:790px" width="6" height="8" viewBox="0 0 6 8" fill="none" stroke="#4d4d4d" stroke-width="2"><path d="M1 .5L4.500 4 1 7.500"/></svg>
<!-- ===== right side panel icons ===== -->
<svg style="left:1578px;top:593px" width="15" height="15" viewBox="0 0 16 15"><path d="M1 8V1h14v12H8" fill="none" stroke="#1d8fd1" stroke-width="1.400"/><rect x="8.500" y="1" width="6.500" height="12" fill="#1d8fd1"/><path d="M4 8.500l.8 1.300 1.500-.3.300 1.500 1.400.7-.8 1.300.8 1.300-1.400.7-.3 1.500-1.500-.3L4 17.500" fill="none" stroke="none"/><circle cx="4" cy="11.500" r="2.600" fill="#1d8fd1"/><circle cx="4" cy="11.500" r="1" fill="#f7f7f7"/></svg>
<span class="t" style="left:1593px;top:609px;font-size:12.500px;transform:rotate(90deg);transform-origin:0 0;line-height:15px">面板</span>
<svg style="left:1578px;top:651px" width="15" height="15" viewBox="0 0 16 15"><rect x=".7" y=".7" width="14.600" height="13.600" fill="#fff" stroke="#1d8fd1" stroke-width="1.400"/><path d="M1 2.500h14M1 5.500h14M1 8.500h14" stroke="#1d8fd1" stroke-width="1.500" stroke-dasharray="1.500 1.500"/><path d="M2.500 4h13M2.500 7h13" stroke="#1d8fd1" stroke-width="1.500" stroke-dasharray="1.500 1.500"/></svg>
<svg style="left:1578px;top:672px" width="15" height="15" viewBox="0 0 16 16"><circle cx="8" cy="8" r="7" fill="none" stroke="#1d8fd1" stroke-width="1.500"/><circle cx="5.500" cy="5.500" r="1.300" fill="#1d8fd1"/><circle cx="10.500" cy="5.500" r="1.300" fill="#1d8fd1"/><circle cx="5.500" cy="10.500" r="1.300" fill="#1d8fd1"/><circle cx="10.500" cy="10.500" r="1.300" fill="#1d8fd1"/></svg>
<svg style="left:1578px;top:693px" width="15" height="17" viewBox="0 0 15 17"><path d="M5 0v5M2.800 2.500h4.400" stroke="#f0860f" stroke-width="1.200"/><rect x="0" y="6" width="14.500" height="11" rx="1.200" fill="#1d8fd1"/><path d="M1.200 7.500h1.800v2H1.200zM7.600 7.500h2.400v2H7.600zM11 7.500h2.400v2H11z" fill="#6cc4f0"/><path d="M1.200 10.700h1.800v2H1.200zM7.600 10.700h2.400v2H7.600zM11 10.700h2.400v2H11zM1.200 13.800h1.800v2H1.200zM7.600 13.800h2.400v2H7.600zM11 13.800h2.400v2H11z" fill="#fff"/><rect x="3.300" y="6" width="3.600" height="11" fill="#f0860f"/><path d="M4.200 7.500h1.800v2H4.200z" fill="#f7b878"/><path d="M4.200 10.700h1.800v2H4.200zM4.200 13.800h1.800v2H4.200z" fill="#fde3c6"/></svg>
<svg style="left:1578px;top:717px" width="15" height="15" viewBox="0 0 15 15"><rect x=".7" y=".7" width="13.600" height="12.800" fill="#fff" stroke="#1d8fd1" stroke-width="1.400"/><rect x="0" y="0" width="15" height="2.800" fill="#1d8fd1"/><rect x="1.800" y="3.700" width="6.400" height="4.400" fill="#5cc0ee"/><rect x="8.300" y="9.200" width="7" height="6" fill="#f7f7f7"/><path d="M9.600 9.600v4.200M14.400 9.600v4.200M9.600 11.700h4.800" stroke="#1d8fd1" stroke-width="1.200" fill="none"/></svg>
<svg style="left:1578px;top:738px" width="15" height="15" viewBox="0 0 16 16"><circle cx="4" cy="4" r="3.200" fill="#1d8fd1"/><circle cx="12" cy="4" r="3.200" fill="#1d8fd1"/><circle cx="4" cy="12" r="3" fill="none" stroke="#1d8fd1" stroke-width="1.200"/><circle cx="12" cy="12" r="3.200" fill="#f0860f"/><path d="M2.500 4h3M10.500 4h3M12 2.500v3M2.200 10.200l3.600 3.600M5.800 10.200l-3.600 3.600" stroke="#fff" stroke-width=".9"/><path d="M2.200 10.200l3.600 3.600M5.800 10.200l-3.600 3.600" stroke="#1d8fd1" stroke-width=".9"/><path d="M10.200 11.200h3.600M10.200 12.800h3.600" stroke="#fff" stroke-width=".9"/></svg>
<svg style="left:1578px;top:816px" width="15" height="15" viewBox="0 0 16 15"><rect x=".5" y="1" width="4.500" height="13.500" rx="1.500" fill="#1d8fd1"/><rect x="7" y="10.500" width="8" height="4" rx="1.500" fill="#1d8fd1"/><path d="M14 9c0-4-2.500-6-6-6" fill="none" stroke="#1d8fd1" stroke-width="1.600"/><path d="M10 0L6.500 3 10 6.500z" fill="#1d8fd1"/></svg>
<!-- ===== bottom toolbar (y 802-833) ===== -->
<svg style="left:60px;top:809px" width="15" height="16" viewBox="0 0 15 16" fill="none" stroke="#1d8fd1" stroke-width="1.700"><path d="M5.500 1.500L1.300 6.500c-.6.800-.6 1.800 0 2.500l3.500 4"/><path d="M9.500 14.500l4.200-5c.6-.8.600-1.800 0-2.500l-3.500-4"/><path d="M5.500 1.500l.3 2.800M5.500 1.500l-2.800.5M9.500 14.500l-.3-2.800M9.500 14.500l2.800-.5" stroke-width="1.300"/><path d="M4.800 8.500c.5-1.700 2.500-2.200 3.800-1.200M10.200 7.500c-.5 1.700-2.500 2.200-3.800 1.200" stroke-width="1.300"/></svg>
<span class="t" id="bt1" style="left:79px;top:809px">刷新</span>
<div class="dd" style="left:117px;top:816px"></div>
<div class="dots" style="left:135px;top:810px"></div>
<svg style="left:146px;top:810px" width="15" height="15" viewBox="0 0 15 15" fill="none" stroke="#a8a8a8" stroke-width="1.200"><circle cx="7.500" cy="7.500" r="6.500"/><path d="M4 7.500l2.500 2.500L11 5"/></svg>
<span class="t dis" style="left:166px;top:809px">保存</span>
<div class="dd ddg" style="left:204px;top:816px"></div>
<svg style="left:221px;top:811px" width="12" height="13" viewBox="0 0 12 13" fill="none" stroke="#a8a8a8" stroke-width="1.100"><rect x=".6" y=".6" width="10.800" height="11.800"/><path d="M3.200 3.700l5.600 5.600M8.800 3.700L3.200 9.300"/></svg>
<span class="t dis" style="left:239px;top:809px">取消</span>
<div class="vsep" style="left:273px;top:804px;height:27px"></div>
<svg style="left:284px;top:811px" width="16" height="13" viewBox="0 0 16 13" fill="none" stroke="#1d8fd1" stroke-width="1.700"><path d="M0 1.500h15M0 6.500h10M0 11.500h6"/><path d="M9 12l1-2.500 4-4 1.500 1.500-4 4z" stroke-width="1" fill="#1d8fd1"/></svg>
<svg style="left:307px;top:811px" width="16" height="13" viewBox="0 0 16 13" fill="none" stroke="#a0a0a0" stroke-width="1.600"><path d="M0 1.500h15M0 6.500h8M0 11.500h6M12 5v8M8.500 9h7"/></svg>
<svg style="left:331px;top:811px" width="16" height="13" viewBox="0 0 16 13" fill="none" stroke="#a0a0a0" stroke-width="1.500"><path d="M0 1.500h15M0 6.500h3M0 11.500h3" stroke-dasharray="2 1"/><path d="M6.500 5c-1.500 1.500-1.500 5.500 0 7M14 5c1.500 1.500 1.500 5.500 0 7M10.200 6v5M8 8.500h4.500" stroke-width="1.100"/></svg>
<svg style="left:355px;top:811px" width="16" height="13" viewBox="0 0 16 13" fill="none" stroke="#a0a0a0" stroke-width="1.600"><path d="M0 1.500h15M0 6.500h6M0 11.500h6M9 9h6.500"/></svg>
<div class="dots" style="left:380px;top:810px"></div>
<svg style="left:387px;top:811px" width="13" height="13" viewBox="0 0 13 13" fill="none" stroke="#9a9a9a" stroke-width="1.700"><path d="M1.500 0v13M11.500 1L5 6.500l6.500 5.500"/></svg>
<svg style="left:412px;top:811px" width="9" height="13" viewBox="0 0 9 13" fill="none" stroke="#9a9a9a" stroke-width="1.700"><path d="M8 1L1.500 6.500 8 12"/></svg>
<svg style="left:436px;top:811px" width="10" height="13" viewBox="0 0 10 13" fill="none" stroke="#1d8fd1" stroke-width="1.800"><path d="M1 1l7 5.500L1 12"/></svg>
<svg style="left:457px;top:811px" width="13" height="13" viewBox="0 0 13 13" fill="none" stroke="#1d8fd1" stroke-width="1.800"><path d="M1 1l7 5.500L1 12M11.500 0v13"/></svg>
<svg style="left:479px;top:810px" width="16" height="15" viewBox="0 0 16 15" fill="none" stroke="#1d8fd1" stroke-width="1.500"><path d="M1 4.500V1h3.500M11.500 1H15v3.500M15 10.500V14h-3.500M4.500 14H1v-3.500"/><rect x="5" y="3.800" width="6" height="7.500" fill="#1d8fd1" stroke="none"/><path d="M6.500 6h3M6.500 8h3" stroke="#fff" stroke-width=".8"/></svg>
<div class="dots" style="left:503px;top:810px"></div>
<svg style="left:518px;top:810px" width="13" height="15" viewBox="0 0 13 15" fill="none" stroke="#1d8fd1" stroke-width="1.500"><path d="M1 10v4h11v-4M6.500 11V1.500M3 4.500L6.500 1 10 4.500"/></svg>
<span class="t" id="bt2" style="left:536px;top:809px">导出数据...</span>
<div class="dd" style="left:608px;top:816px"></div>
<div class="dots" style="left:625px;top:810px"></div>
<svg style="left:631px;top:810px" width="15" height="15" viewBox="0 0 15 15"><path d="M12.670 8.020L14.870 8.890L13.690 11.730L11.530 10.790L10.790 11.530L11.730 13.690L8.890 14.870L8.020 12.670L6.980 12.670L6.110 14.870L3.270 13.690L4.210 11.530L3.470 10.790L1.310 11.730L0.130 8.890L2.330 8.020L2.330 6.980L0.130 6.110L1.310 3.270L3.470 4.210L4.210 3.470L3.270 1.310L6.110 0.130L6.980 2.330L8.020 2.330L8.890 0.130L11.730 1.310L10.790 3.470L11.530 4.210L13.690 3.270L14.870 6.110L12.670 6.980z" fill="#1d8fd1" stroke="#1d8fd1" stroke-width=".8" stroke-linejoin="round"/><path d="M7.500 4.800l2.700 2.700-2.700 2.700-2.700-2.700z" fill="#7cc6f0"/></svg>
<div class="a" style="left:654px;top:806px;width:54px;height:23px;background:#fff;border:1px solid #7a7a7a"></div>
<span class="t" style="left:659px;top:809px;font-size:12.200px">200</span>
<svg style="left:715px;top:810px" width="15" height="15" viewBox="0 0 15 15" fill="none" stroke="#1d8fd1" stroke-width="1.400"><path d="M1 10v4h13v-4M3 1l4.500 5L12 1M7.500 6v5"/></svg>
<span class="t" style="left:737px;top:809px;font-size:12.200px">446</span>
<div class="dots" style="left:766px;top:810px"></div>
<span class="t" style="left:793px;top:808px;font-size:10px;color:#444;letter-spacing:.3px">···</span>
<span class="t" id="bt3" style="left:812px;top:809px;font-size:12.600px">200 行已获取 - 3.738s (3ms 获取), 2025-10-21 20:22:28</span>
<!-- ===== status bar (y 834-859) ===== -->
<div class="a" style="left:0;top:859px;width:1600px;height:1px;background:#fff"></div>
<div class="vsep st" style="left:778px"></div><div class="vsep st" style="left:814px"></div><div class="vsep st" style="left:841px"></div><div class="vsep st" style="left:975px"></div><div class="vsep st" style="left:1103px"></div><div class="vsep st" style="left:1231px"></div>
<span class="t s" style="left:786px">CST</span><span class="t s" style="left:822px">zh</span><span class="t s" style="left:849px">可写</span><span class="t s" style="left:983px">智能插入</span><span class="t s" style="left:1111px;font-size:12.600px">1532 : 1 : 63883</span><span class="t s" style="left:1239px">Sel: 0 | 0</span>
<div class="dots" style="left:1315px;top:839px"></div>
<!-- ===== taskbar ===== -->
<div class="a" id="taskbar" style="left:0;top:860px;width:1600px;height:40px;background:#000"></div>
<div class="a" style="left:294px;top:860px;width:48px;height:40px;background:#333"></div>
<div class="a" style="left:294px;top:898px;width:48px;height:2px;background:#76b9ed"></div>
<svg style="left:15px;top:872px" width="17" height="16" viewBox="0 0 17 16" fill="#fff"><path d="M0 2.300l7-1v6.200H0zM8 1.200L17 0v7.500H8zM0 8.500h7v6.200l-7-1zM8 8.500h9V16l-9-1.200z"/></svg>
<svg style="left:64px;top:872px" width="17" height="17" viewBox="0 0 17 17" fill="none" stroke="#fff" stroke-width="1.400"><circle cx="10.500" cy="6.500" r="5.500"/><path d="M6.500 10.500l-6 6"/></svg>
<svg style="left:111px;top:872px" width="17" height="15" viewBox="0 0 17 15" fill="none" stroke="#fff" stroke-width="1.300"><rect x="2.500" y="3.500" width="9" height="8"/><path d="M.5 1v13M2.500 1h9M2.500 14h9M14.500 1v3M14.500 6.500v8M16.500 6.500h-2"/></svg>
<svg style="left:160px;top:867px" width="23" height="25" viewBox="0 0 23 25"><path d="M12 3.500c5.500 0 9.300 3.800 9.300 9.300 0 .8 0 1.200-.2 1.700H8.200c.3 2.200 2 3.600 4.400 3.600 1.800 0 3.100-.5 4.400-1.600l2.500 3c-1.900 1.900-4.400 3-7.500 3C6.500 22.500 2.700 18.700 2.700 13S6.500 3.500 12 3.500zm0 4.200c-2.100 0-3.500 1.400-3.800 3.500h7.700c-.2-2.200-1.700-3.500-3.900-3.500z" fill="#2fbdf2"/><path d="M21 1.300c1.700 1.600 1.200 4.300-1 7.500M4.500 23.700c-3.400-1-4.500-4.400-1.200-9.700C6.600 8.600 13 3 18.500 1.500" fill="none" stroke="#f3c31b" stroke-width="1.800"/></svg>
<svg style="left:209px;top:871px" width="22" height="18" viewBox="0 0 22 18"><path d="M.5.500h7l2 2h11.500v15H.5z" fill="#f5cf62"/><path d="M.5 3.800h20.500v14H.5z" fill="#fbe08f"/><path d="M4.500 17.800V10h12.500v7.800h-3v-4.600H7.500v4.600z" fill="#2f9fe8"/></svg>
<svg class="dbv" style="left:257px;top:868px" width="24" height="24" viewBox="0 0 24 24"><circle cx="12" cy="12" r="10.900" fill="#fff" stroke="#45b3b4" stroke-width="2.200"/><path d="M4.600 15c-.5-4 1.500-8.300 6-9.300 3-.7 6.200 0 8.500 2 .8.700.5 1.800-.5 2.100l-2 .7-.5 3.500-2.500-2c-2 1-3.500 3-4 6.500-2.500-.5-4.500-1.500-5-3.500z" fill="#e9e9e9"/><path d="M7.800 21.800c.2-4.300 1.800-7.600 5-9.300l1.200-.2 1.600 1.700 1.300 1.500.3 2.500c.1 1.500-.2 2.800-.9 4-2.500 1-5.700.9-8.500-.2z" fill="#2a2322"/><ellipse cx="17.800" cy="8.800" rx="1.900" ry="1.400" fill="#1a1a1a"/><path d="M12.600 8.300l1.500-.6.300.8z" fill="#333"/><path d="M15.200 12h1.600v3h-1.600z" fill="#fff"/><path d="M7 9.500c1-1.700 2.500-2.600 4.200-2.800M6 12.500c.3-1 .8-1.800 1.400-2.400M8 7.500c1-.8 2-1.200 3.200-1.400" stroke="#888" stroke-width=".6" fill="none"/></svg>
<svg class="dbv" style="left:306px;top:868px" width="24" height="24" viewBox="0 0 24 24"><circle cx="12" cy="12" r="10.900" fill="#fff" stroke="#45b3b4" stroke-width="2.200"/><path d="M4.600 15c-.5-4 1.500-8.300 6-9.300 3-.7 6.200 0 8.500 2 .8.700.5 1.800-.5 2.100l-2 .7-.5 3.500-2.500-2c-2 1-3.500 3-4 6.500-2.500-.5-4.500-1.500-5-3.500z" fill="#e9e9e9"/><path d="M7.800 21.800c.2-4.300 1.800-7.600 5-9.300l1.200-.2 1.600 1.700 1.300 1.500.3 2.500c.1 1.500-.2 2.800-.9 4-2.500 1-5.700.9-8.500-.2z" fill="#2a2322"/><ellipse cx="17.800" cy="8.800" rx="1.900" ry="1.400" fill="#1a1a1a"/><path d="M12.600 8.300l1.500-.6.300.8z" fill="#333"/><path d="M15.200 12h1.600v3h-1.600z" fill="#fff"/><path d="M7 9.500c1-1.700 2.500-2.600 4.200-2.800M6 12.500c.3-1 .8-1.800 1.400-2.400M8 7.500c1-.8 2-1.200 3.200-1.400" stroke="#888" stroke-width=".6" fill="none"/></svg>
<svg style="left:1348px;top:876px" width="13" height="8" viewBox="0 0 13 8" fill="none" stroke="#fff" stroke-width="1.300"><path d="M.5 7.500l6-6.500 6 6.500"/></svg>
<svg style="left:1373px;top:872px" width="14" height="17" viewBox="0 0 14 17" fill="none" stroke="#fff" stroke-width="1.100"><path d="M2.500 4.500V.8h5v3.700M.8 4.500h8.400v9.500a1.500 1.500 0 01-1.500 1.500H2.300A1.500 1.500 0 01.8 14z"/><path d="M4 2.500h.5M6 2.500h.5"/><path d="M8.500 13.500l2 2 3-3.500" stroke="#bbb" stroke-width="1"/></svg>
<svg style="left:1394px;top:874px" width="17" height="14" viewBox="0 0 17 14" fill="none" stroke="#fff" stroke-width="1.200"><path d="M3.500.8h12.500v8.700H6"/><path d="M7 13h7M10.500 9.500V13"/><rect x=".7" y="1.500" width="3.500" height="4"/><path d="M2.500 5.500v7.500h2"/></svg>
<svg style="left:1418px;top:873px" width="18" height="15" viewBox="0 0 18 15" fill="none" stroke="#fff" stroke-width="1.200"><path d="M.8 5h3l3.700-3.500v12L3.800 10h-3z"/><path d="M10 5c1.200 1.300 1.200 3.700 0 5M12.500 3c2.200 2.300 2.200 6.700 0 9M15 1c3 3.300 3 9.700 0 13" stroke-width="1.100"/></svg>
<span class="t" style="left:1443px;top:872px;color:#fff;font-size:12px">ENG</span>
<span class="t" style="left:1495px;top:863px;color:#fff;font-size:12.400px">20:22</span>
<span class="t" style="left:1477px;top:882px;color:#fff;font-size:13px">2025/10/21</span>
<svg style="left:1559px;top:872px" width="25" height="24" viewBox="0 0 25 24"><path d="M0 0h16v12H7.500L4 15v-3H0z" fill="#fff"/><path d="M3 3.500h10M3 6h10M3 8.500h7" stroke="#000" stroke-width="1"/><circle cx="16" cy="15" r="8" fill="#000"/><circle cx="16" cy="15" r="7" fill="#555"/><text x="16" y="19.500" text-anchor="middle" font-family="Liberation Sans,sans-serif" font-size="12" font-weight="bold" fill="#fff">1</text></svg>
<div class="a" style="left:1595px;top:860px;width:1px;height:40px;background:#555"></div>
<!-- ===== watermarks ===== -->
<div id="wm"><div class="wm" style="left:157px;top:155.5px">audit审计01(Audit1)<br>audit-172.18.210.237</div><div class="wm" style="left:457px;top:155.5px">audit审计01(Audit1)<br>audit-172.18.210.237</div><div class="wm" style="left:757px;top:155.5px">audit审计01(Audit1)<br>audit-172.18.210.237</div><div class="wm" style="left:1057px;top:155.5px">audit审计01(Audit1)<br>audit-172.18.210.237</div><div class="wm" style="left:1357px;top:155.5px">audit审计01(Audit1)<br>audit-172.18.210.237</div><div class="wm" style="left:1657px;top:155.5px">audit审计01(Audit1)<br>audit-172.18.210.237</div><div class="wm" style="left:157px;top:455.5px">audit审计01(Audit1)<br>audit-172.18.210.237</div><div class="wm" style="left:457px;top:455.5px">audit审计01(Audit1)<br>audit-172.18.210.237</div><div class="wm" style="left:757px;top:455.5px">audit审计01(Audit1)<br>audit-172.18.210.237</div><div class="wm" style="left:1057px;top:455.5px">audit审计01(Audit1)<br>audit-172.18.210.237</div><div class="wm" style="left:1357px;top:455.5px">audit审计01(Audit1)<br>audit-172.18.210.237</div><div class="wm" style="left:1657px;top:455.5px">audit审计01(Audit1)<br>audit-172.18.210.237</div><div class="wm" style="left:157px;top:755.5px">audit审计01(Audit1)<br>audit-172.18.210.237</div><div class="wm" style="left:457px;top:755.5px">audit审计01(Audit1)<br>audit-172.18.210.237</div><div class="wm" style="left:757px;top:755.5px">audit审计01(Audit1)<br>audit-172.18.210.237</div><div class="wm" style="left:1057px;top:755.5px">audit审计01(Audit1)<br>audit-172.18.210.237</div><div class="wm" style="left:1357px;top:755.5px">audit审计01(Audit1)<br>audit-172.18.210.237</div><div class="wm" style="left:1657px;top:755.5px">audit审计01(Audit1)<br>audit-172.18.210.237</div></div>
</body>
</html>
